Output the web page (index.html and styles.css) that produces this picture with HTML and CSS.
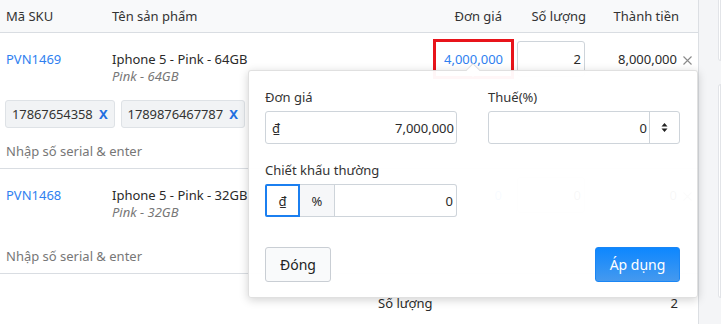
FILE: index.html
```html
<!DOCTYPE html>
<html lang="vi">
<head>
<meta charset="utf-8">
<link rel="stylesheet" href="styles.css">
</head>
<body>
<div class="page">
  <div class="main">
    <div class="row head">
      <div class="c-sku">Mã SKU</div>
      <div class="c-name">Tên sản phẩm</div>
      <div class="c-price">Đơn giá</div>
      <div class="c-qty">Số lượng</div>
      <div class="c-total">Thành tiền</div>
    </div>

    <div class="item">
      <div class="row">
        <div class="c-sku cell-text"><a class="link">PVN1469</a></div>
        <div class="c-name cell-text">
          <div>Iphone 5 - Pink - 64GB</div>
          <div class="variant">Pink - 64GB</div>
        </div>
        <div class="c-price"><span class="price-box"><a class="link">4,000,000</a></span></div>
        <div class="c-qty"><div class="qty-input">2</div></div>
        <div class="c-total cell-text">8,000,000<span class="remove"><svg width="9" height="9" viewBox="0 0 9 9"><path d="M0.5 0.5 L8.5 8.5 M8.5 0.5 L0.5 8.5" stroke="#8a8a8a" stroke-width="1.1"/></svg></span></div>
      </div>
      <div class="tags">
        <span class="tag">17867654358 <b>X</b></span>
        <span class="tag">1789876467787 <b>X</b></span>
      </div>
      <div class="serial">Nhập số serial &amp; enter</div>
    </div>

    <div class="item item2">
      <div class="row">
        <div class="c-sku cell-text"><a class="link">PVN1468</a></div>
        <div class="c-name cell-text">
          <div>Iphone 5 - Pink - 32GB</div>
          <div class="variant">Pink - 32GB</div>
        </div>
        <div class="c-price cell-text"><a class="link">0</a></div>
        <div class="c-qty"><div class="qty-input">0</div></div>
        <div class="c-total cell-text">0<span class="remove"><svg width="9" height="9" viewBox="0 0 9 9"><path d="M0.5 0.5 L8.5 8.5 M8.5 0.5 L0.5 8.5" stroke="#8a8a8a" stroke-width="1.1"/></svg></span></div>
      </div>
      <div class="serial serial2">Nhập số serial &amp; enter</div>
    </div>

    <div class="summary">
      <span class="sum-label">Số lượng</span>
      <span class="sum-val">2</span>
    </div>

    <div class="popover">
      <div class="arrow"></div>
      <div class="pop-grid">
        <div class="field">
          <label>Đơn giá</label>
          <div class="input currency"><span class="cur">₫</span><span>7,000,000</span></div>
        </div>
        <div class="field">
          <label>Thuế(%)</label>
          <div class="input spin"><span class="spin-val">0</span><span class="spin-btn">
            <svg width="7" height="11" viewBox="0 0 7 11"><path d="M3.5 1 L6.5 4.5 H0.5 Z M3.5 10 L6.5 6.5 H0.5 Z" fill="#222"/></svg>
          </span></div>
        </div>
        <div class="field">
          <label>Chiết khấu thường</label>
          <div class="group">
            <span class="g-btn active">₫</span>
            <span class="g-btn pct">%</span>
            <span class="g-input">0</span>
          </div>
        </div>
      </div>
      <div class="pop-actions">
        <button class="btn btn-light">Đóng</button>
        <button class="btn btn-primary">Áp dụng</button>
      </div>
    </div>
  </div>
  <div class="side">
    <div class="side-card top"></div>
    <div class="side-card bottom"></div>
  </div>
</div>
</body>
</html>
```

FILE: styles.css
```css
* { box-sizing: border-box; }
html, body { margin: 0; padding: 0; }
body {
  background: #f4f5f7;
  font-family: "Noto Sans", "Segoe UI", sans-serif;
  font-size: 13px;
  color: #2a2a2a;
  width: 721px;
  height: 324px;
  overflow: hidden;
}
.page { display: flex; height: 324px; }
.main {
  position: relative;
  width: 699px;
  flex: none;
  background: #fff;
  border-right: 1px solid #dcdfe3;
}
.side {
  margin-left: 19px;
  display: flex;
  flex-direction: column;
  gap: 23px;
  flex: 1;
}
.side-card { background: #fff; border: 1px solid #e2e4e8; border-radius: 4px; }
.side-card.top { height: 65px; margin-top: -4px; border-top: none; border-radius: 0 0 0 4px; }
.side-card.bottom { height: 214px; border-radius: 4px 0 0 4px; }

.row {
  display: grid;
  grid-template-columns: 112px 1fr 102px 76px 108px;
}
.head {
  height: 33px;
  background: #f8f9fa;
  border-bottom: 1px solid #d9dde2;
  align-items: center;
  color: #333;
  padding-bottom: 1px;
}
.head .c-sku { padding-left: 6px; }
.head .c-price { text-align: right; padding-right: 12px; }
.head .c-qty { text-align: right; padding-right: 4px; }
.head .c-total { text-align: right; padding-right: 19px; }

.item { border-bottom: 1px solid #d9dde2; }
.item .row { padding-top: 8px; align-items: start; }
.cell-text { padding-top: 9px; line-height: 18px; }
.c-sku.cell-text { padding-left: 6px; }
.link { color: #2f7ff0; text-decoration: none; }
.variant { font-size: 13px; font-style: italic; color: #777; line-height: 16px; }
.c-price { display: flex; justify-content: flex-end; }
.c-price.cell-text { padding-right: 12px; }
.price-box {
  margin-top: -2px;
  width: 81px;
  height: 40px;
  border: 3px solid #e8141b;
  display: flex;
  align-items: center;
  justify-content: center;
}
.c-qty { padding-left: 3px; }
.qty-input {
  width: 68px;
  height: 36px;
  border: 1px solid #ced4da;
  border-radius: 3px;
  display: flex;
  align-items: center;
  justify-content: flex-end;
  padding-right: 3px;
}
.c-total { text-align: right; padding-right: 6px; }
.remove { display: inline-block; width: 15px; text-align: right; }
.remove svg { display: inline-block; vertical-align: -1px; }

.tags { display: flex; gap: 6px; padding: 16px 0 0 5px; }
.tag {
  height: 28px;
  padding: 0 6px 0 6px;
  display: inline-flex;
  align-items: center;
  background: #f1f3f5;
  border: 1px solid #dee2e6;
  border-radius: 3px;
  color: #333;
  white-space: pre;
  letter-spacing: -0.1px;
}
.tag b { color: #1f6fe0; font-weight: 700; margin-left: 3px; }
.serial { color: #777; padding: 14px 0 8px 6px; line-height: 18px; }
.serial2 { padding-top: 27px; }

.summary {
  display: flex;
  justify-content: space-between;
  padding: 20px 20px 0 378px;
  line-height: 18px;
}

.popover {
  position: absolute;
  left: 248px;
  top: 70px;
  width: 450px;
  height: 228px;
  background: rgba(255,255,255,0.965);
  border: 1px solid rgba(0,0,0,0.12);
  border-radius: 3px;
  box-shadow: 0 2px 10px rgba(0,0,0,0.18);
  padding: 17px 17px 15px 16px;
  display: flex;
  flex-direction: column;
  justify-content: space-between;
}
.arrow {
  position: absolute;
  top: -6px;
  left: 219px;
  width: 10px;
  height: 10px;
  background: #fff;
  border-left: 1px solid rgba(0,0,0,0.12);
  border-top: 1px solid rgba(0,0,0,0.12);
  transform: rotate(45deg);
}
.pop-grid {
  display: grid;
  grid-template-columns: 192px 192px;
  column-gap: 31px;
  row-gap: 17px;
}
.field label { display: block; line-height: 18px; margin-bottom: 5px; color: #333; }
.input {
  height: 33px;
  border: 1px solid #ced4da;
  border-radius: 3px;
  display: flex;
  align-items: center;
  justify-content: space-between;
  padding: 0 2px 0 6px;
}
.spin { padding: 0; }
.spin-val { flex: 1; text-align: right; padding-right: 2px; }
.spin-btn {
  width: 30px; height: 100%;
  border-left: 1px solid #ced4da;
  display: flex; align-items: center; justify-content: center;
}
.group { display: flex; height: 33px; }
.g-btn {
  width: 35px;
  display: flex; align-items: center; justify-content: center;
  border: 1px solid #ced4da;
}
.g-btn.active { border: 2px solid #1b7ff0; border-radius: 2px 0 0 2px; }
.g-btn.pct { background: #f6f7f9; border-left: none; width: 35px; }
.g-input {
  flex: 1;
  border: 1px solid #ced4da;
  border-left: none;
  border-radius: 0 3px 3px 0;
  display: flex; align-items: center; justify-content: flex-end;
  padding-right: 3px;
}
.pop-actions { display: flex; justify-content: space-between; }
.btn {
  font-family: inherit;
  font-size: 14px;
  height: 35px;
  border-radius: 3px;
  cursor: pointer;
}
.btn-light { width: 66px; background: #f9fafb; border: 1px solid #c9ced4; color: #222; }
.btn-primary {
  width: 85px;
  border: 1px solid #1a86f5;
  color: #fff;
  background: linear-gradient(180deg, #0d87ff, #4599ee);
}
```
